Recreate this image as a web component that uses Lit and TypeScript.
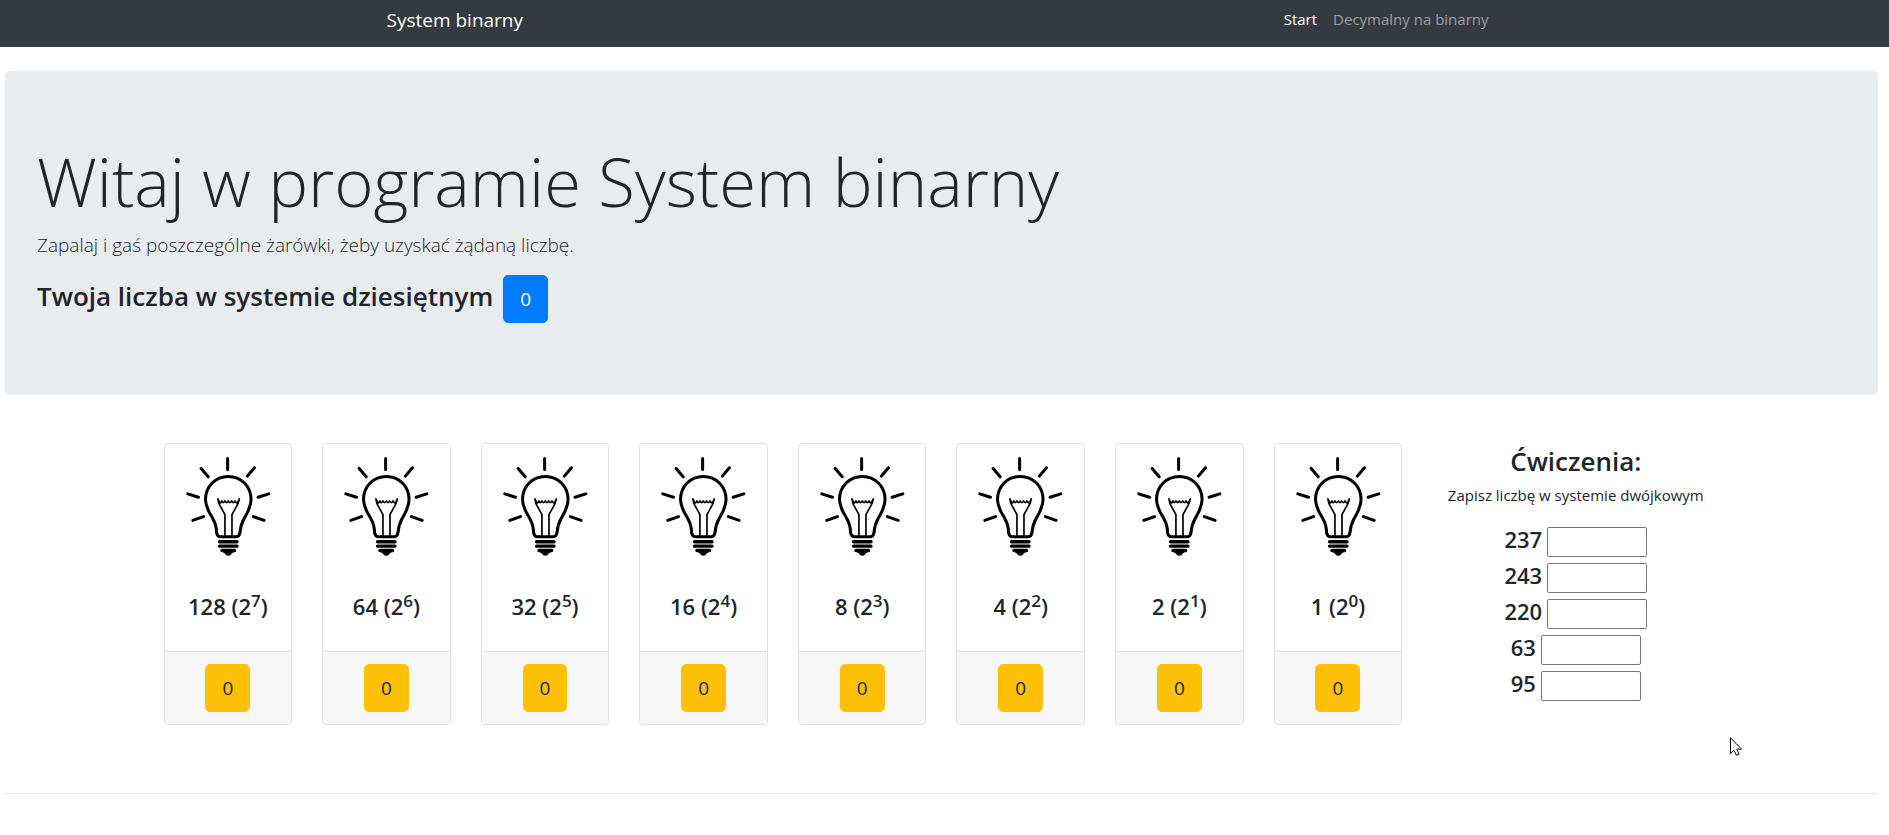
import { LitElement, html, css, svg } from "lit";
import { customElement, property, state } from "lit/decorators.js";
import { classMap } from "lit/directives/class-map.js";

const WEIGHTS = [7, 6, 5, 4, 3, 2, 1, 0];
const EXERCISES = [237, 243, 220, 63, 95];

const RAYS = svg`
  <path d="M232 86v33M153 116l21 25M312 114l-21 25M113 192l32 10M355 192l-32 10M128 271l32-11M341 271l-32-11"
    fill="none" stroke="#000" stroke-width="9" stroke-linecap="round"/>`;

@customElement("bulb-card")
export class BulbCard extends LitElement {
  static styles = css`
    :host {
      display: flex;
      flex-direction: column;
      flex: 1 1 0;
      min-width: 0;
      box-sizing: border-box;
      border: 1px solid #dfdfdf;
      border-radius: 4px;
      background: #fff;
      text-align: center;
    }
    .bulb {
      display: block;
      width: 100%;
    }
    .body {
      flex: 1;
      padding: 20px 0;
    }
    .title {
      margin: 0 0 10px;
      font-size: 22px;
      font-weight: 600;
      line-height: 30px;
    }
    .power {
      position: relative;
      top: -8px;
      vertical-align: baseline;
      font-size: 17px;
      line-height: 0;
    }
    .footer {
      padding: 12px;
      border-top: 1px solid #dfdfdf;
      border-radius: 0 0 3px 3px;
      background: #f7f7f7;
    }
    .bit {
      display: block;
      margin: 0 auto;
      padding: 8px 16px;
      border: 1px solid #ffc107;
      border-radius: 5px;
      background: #ffc107;
      color: #212529;
      font: inherit;
      font-size: 19px;
      line-height: 30px;
      cursor: pointer;
    }
  `;

  @property({ type: Number }) exponent = 0;
  @property({ type: Boolean }) on = false;

  private toggle() {
    this.dispatchEvent(new CustomEvent("bit-toggle", { detail: this.exponent }));
  }

  render() {
    return html`
      <svg class="bulb" viewBox="45 43 378 378" aria-hidden="true">
        ${RAYS}
        <path
          d="M199 308C199 291 197 282 188 266C177 246 166 233 166 209C166 169 196 140 234 140C272 140 302 169 302 209C302 233 292 246 281 266C272 282 270 291 269 308Q267 320 256 320H212Q201 320 199 308Z"
          fill=${this.on ? "#ffe45c" : "none"} stroke="#000" stroke-width="9"/>
        <path
          d="M224 317V254L206 221L203 207L208 217Q211 222 215 213Q219 223 224 213Q229 223 234 213Q239 223 244 213Q249 223 254 213Q259 222 262 217L267 207L263 221L245 254V317"
          fill="none" stroke="#000" stroke-width="5" stroke-linejoin="round" stroke-linecap="round"/>
        <path d="M208 335h52M208 348h52M215 361h38" stroke="#000" stroke-width="10" stroke-linecap="round"/>
        <path d="M216 363H252Q248 368 244 370Q242 377 234 377Q226 377 224 370Q220 368 216 363Z"/>
      </svg>
      <div class="body">
        <h4 class="title">${2 ** this.exponent} (2<sup class="power">${this.exponent}</sup>)</h4>
      </div>
      <div class="footer">
        <button class="bit" type="button" aria-label="Bit ${this.exponent}: ${this.on ? 1 : 0}" @click=${this.toggle}>${this.on ? 1 : 0}</button>
      </div>
    `;
  }
}

@customElement("app-root")
export class AppRoot extends LitElement {
  static styles = css`
    :host {
      display: block;
      min-height: 100vh;
      background: #fff;
      color: #212529;
      font-family: "Open Sans", "Noto Sans", sans-serif;
      font-size: 15px;
      line-height: 24px;
    }
    .navbar {
      padding-right: 6px;
      background: #343a40;
    }
    .nav-inner {
      display: flex;
      align-items: flex-start;
      justify-content: space-between;
      box-sizing: border-box;
      max-width: 1140px;
      min-height: 47px;
      margin: 0 auto;
      padding: 5px 15px;
    }
    .brand {
      color: #fff;
      font-size: 19px;
      line-height: 30px;
      text-decoration: none;
    }
    .links {
      display: flex;
      margin: 0;
      padding: 2px 0;
      list-style: none;
    }
    .link {
      padding: 0 8px;
      color: rgba(255, 255, 255, 0.5);
      text-decoration: none;
    }
    .active {
      color: #fff;
    }
    .page {
      position: relative;
      padding: 24px 11px 40px 5px;
    }
    .hero {
      padding: 64px 32px;
      border-radius: 5px;
      background: #e9ecef;
    }
    .hero-title {
      margin: 0 0 2px;
      font-size: 67px;
      font-weight: 300;
      line-height: 92px;
    }
    .lead {
      margin: 0 0 14px;
      font-size: 19px;
      font-weight: 300;
      line-height: 32px;
    }
    .sum {
      display: flex;
      align-items: flex-start;
      gap: 10px;
      margin: 0 0 8px;
      font-size: 26px;
      font-weight: 600;
      line-height: 42px;
    }
    .total {
      padding: 8px 16px;
      border: 1px solid #007bff;
      border-radius: 5px;
      background: #007bff;
      color: #fff;
      font: inherit;
      font-size: 19px;
      font-weight: 400;
      line-height: 30px;
    }
    .board {
      display: grid;
      grid-template-columns: 4fr 1fr;
      width: calc((100% + 30px) * 10 / 12);
      margin: 48px auto 0;
      padding-bottom: 68px;
    }
    .cards {
      display: flex;
      gap: 30px;
      padding: 0 15px;
    }
    .exercises {
      text-align: center;
    }
    .exercises-title {
      margin: 0 0 4px;
      font-size: 26px;
      font-weight: 600;
      line-height: 36px;
    }
    .hint {
      margin: 0 0 20px;
      line-height: 24px;
    }
    .row {
      display: flex;
      justify-content: center;
      gap: 5px;
      margin-bottom: 6px;
    }
    .number {
      font-size: 22px;
      font-weight: 600;
      line-height: 24px;
    }
    .answer {
      box-sizing: border-box;
      width: 100px;
      height: 30px;
      padding: 1px 4px;
      border: 1px solid #767676;
      border-radius: 2px;
      background: #fff;
      color: inherit;
      font: inherit;
    }
    .correct {
      border-color: #28a745;
    }
    .rule {
      margin: 0;
      border: 0;
      border-top: 1px solid #e5e5e5;
    }
    .pointer {
      position: absolute;
      top: 690px;
      right: 147px;
      width: 12px;
      height: 19px;
      pointer-events: none;
    }
  `;

  @state() private value = 0;
  @state() private answers: Record<number, string> = {};

  private flip(e: CustomEvent<number>) {
    this.value ^= 1 << e.detail;
  }

  private answer(n: number, e: Event) {
    this.answers = { ...this.answers, [n]: (e.target as HTMLInputElement).value.trim() };
  }

  render() {
    return html`
      <nav class="navbar">
        <div class="nav-inner">
          <a class="brand" href="#">System binarny</a>
          <ul class="links">
            <li><a class="link active" href="#">Start</a></li>
            <li><a class="link" href="#decymalny">Decymalny na binarny</a></li>
          </ul>
        </div>
      </nav>
      <main class="page">
        <section class="hero">
          <h1 class="hero-title">Witaj w programie System binarny</h1>
          <p class="lead">Zapalaj i gaś poszczególne żarówki, żeby uzyskać żądaną liczbę.</p>
          <h3 class="sum">
            <span>Twoja liczba w systemie dziesiętnym</span>
            <button class="total" type="button">${this.value}</button>
          </h3>
        </section>
        <section class="board">
          <div class="cards">
            ${WEIGHTS.map(
              (x) => html`<bulb-card .exponent=${x} .on=${Boolean(this.value & (1 << x))} @bit-toggle=${this.flip}></bulb-card>`
            )}
          </div>
          <div class="exercises">
            <h3 class="exercises-title">Ćwiczenia:</h3>
            <p class="hint">Zapisz liczbę w systemie dwójkowym</p>
            ${EXERCISES.map(
              (n) => html`<div class="row">
                <label class="number" for="answer-${n}">${n}</label>
                <input
                  id="answer-${n}"
                  class=${classMap({ answer: true, correct: this.answers[n] === n.toString(2) })}
                  type="text"
                  @input=${(e: Event) => this.answer(n, e)}
                />
              </div>`
            )}
          </div>
        </section>
        <hr class="rule" />
        <svg class="pointer" viewBox="0 0 12 19" aria-hidden="true">
          <path d="M.5.8V16.500L4 13.200L6.500 18.300L9 17.200L6.800 12.200H11.500Z" fill="#fff" stroke="#000" stroke-width="1"/>
        </svg>
      </main>
    `;
  }
}
